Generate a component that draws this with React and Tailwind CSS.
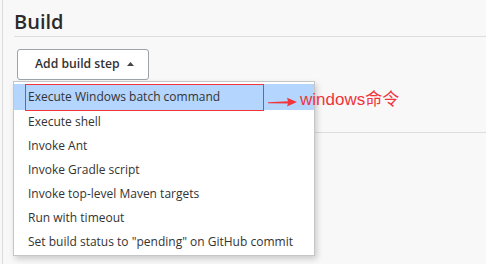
const items = [
  "Execute Windows batch command",
  "Execute shell",
  "Invoke Ant",
  "Invoke Gradle script",
  "Invoke top-level Maven targets",
  "Run with timeout",
  'Set build status to "pending" on GitHub commit',
];

export default function App() {
  return (
    <div
      className="relative w-[486px] h-[264px] overflow-hidden bg-[#f8f8f8] text-[#333]"
      style={{ fontFamily: '"Open Sans", "Noto Sans", sans-serif' }}
    >
      {/* page column with left rule */}
      <div className="ml-[2px] h-full border-l border-[#dcdcdc] pl-[11px]">
        <h2 className="pt-[9px] h-[36px] text-[20px] leading-[26px] font-semibold text-[#2b2b2b]">
          Build
        </h2>
        <div className="border-b border-[#dddddd]" />

        {/* section */}
        <div className="h-[96px] border-b border-[#dddddd] pt-[12px] pl-[3px]">
          <button
            type="button"
            className="flex items-center gap-[7px] h-[31px] w-[132px] pl-[17px] rounded-[3px] border-[1.5px] border-[#9ca3a9] bg-white text-[12.2px] font-semibold text-[#333]"
          >
            Add build step
            <svg width="7" height="4" viewBox="0 0 7 4" className="mt-[-1px]">
              <path d="M0 4 L3.5 0 L7 4 Z" fill="#444" />
            </svg>
          </button>
        </div>
      </div>

      {/* dropdown menu */}
      <div className="absolute left-[13px] top-[81px] w-[302px] h-[175px] border border-[#c6c6c6] bg-white pt-[2px] shadow-[2px_3px_6px_rgba(0,0,0,0.18)]">
        {items.map((label, i) => (
          <div
            key={label}
            className={`flex items-center pl-[14px] text-[12px] text-[#333] ${
              i === 0 ? "h-[26px] bg-[#b4d5fe]" : "h-[24px]"
            }`}
          >
            {label}
          </div>
        ))}
      </div>

      {/* annotation: red box, arrow and note */}
      <div className="absolute left-[25px] top-[84px] w-[239px] h-[27px] border border-[#f0353b]" />
      <div
        className="absolute left-[268px] top-[88px] flex items-center gap-[3px] text-[17px] leading-[24px] text-[#f0353b]"
        style={{ fontFamily: '"Liberation Sans", "Noto Sans CJK SC", sans-serif' }}
      >
        <svg width="29" height="12" viewBox="0 0 29 12" className="mt-[3px]">
          <path d="M0 6.2 L20 5.2 L19 1.8 L29 6 L19 10.4 L20 7.6 L0 7.2 Z" fill="#f0353b" />
        </svg>
        <span>windows命令</span>
      </div>
    </div>
  );
}
